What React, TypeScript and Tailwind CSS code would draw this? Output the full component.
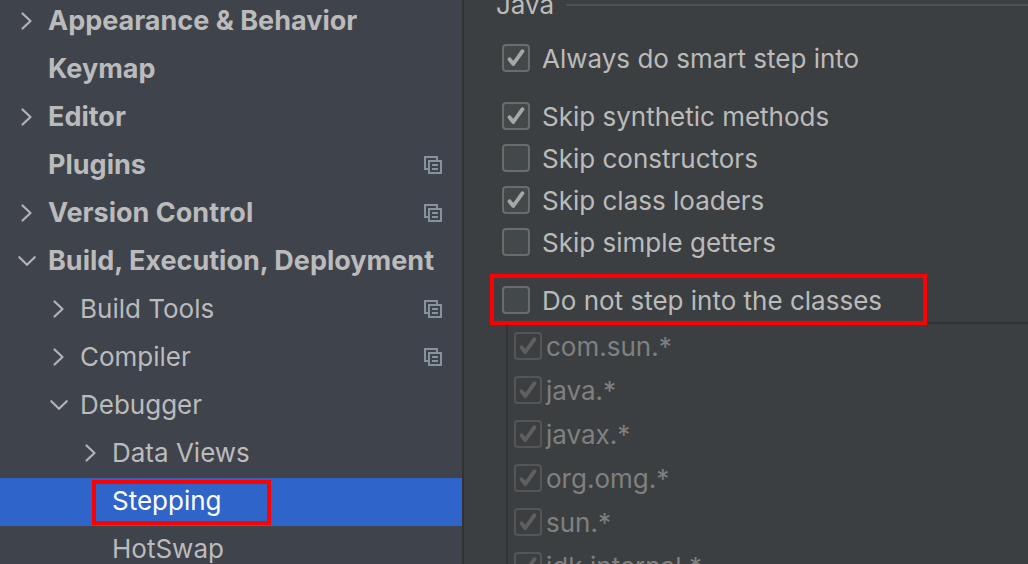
type TreeNode = {
  label: string;
  level: 0 | 1 | 2;
  state?: "open" | "closed";
  scoped?: boolean;
  selected?: boolean;
};

const tree: TreeNode[] = [
  { label: "Appearance & Behavior", level: 0, state: "closed" },
  { label: "Keymap", level: 0 },
  { label: "Editor", level: 0, state: "closed" },
  { label: "Plugins", level: 0, scoped: true },
  { label: "Version Control", level: 0, state: "closed", scoped: true },
  { label: "Build, Execution, Deployment", level: 0, state: "open" },
  { label: "Build Tools", level: 1, state: "closed", scoped: true },
  { label: "Compiler", level: 1, state: "closed", scoped: true },
  { label: "Debugger", level: 1, state: "open" },
  { label: "Data Views", level: 2, state: "closed" },
  { label: "Stepping", level: 2, selected: true },
  { label: "HotSwap", level: 2 },
];

const skipOptions = [
  { label: "Skip synthetic methods", checked: true },
  { label: "Skip constructors", checked: false },
  { label: "Skip class loaders", checked: true },
  { label: "Skip simple getters", checked: false },
];

const classPatterns = ["com.sun.*", "java.*", "javax.*", "org.omg.*", "sun.*", "jdk.internal.*"];

const indents = ["pl-4 text-[27px] font-bold", "pl-12", "pl-20"];

function Chevron({ state }: { state?: "open" | "closed" }) {
  return (
    <svg viewBox="0 0 22 22" className="size-[22px] shrink-0" fill="none" stroke="#b2b4b6" strokeWidth="2.2" strokeLinecap="round" strokeLinejoin="round" aria-hidden="true">
      {state === "closed" && <path d="M6.5 3.5 14.5 11l-8 7.5" />}
      {state === "open" && <path d="M3.3 7.2 11 14.8l7.7-7.6" />}
    </svg>
  );
}

function ScopeIcon() {
  return (
    <svg viewBox="0 0 18 18" className="size-[18px] shrink-0" fill="#87939a" shapeRendering="crispEdges" aria-hidden="true">
      <path d="M0 0h14v4h-2V2H2v10h2v2H0z" />
      <path fillRule="evenodd" d="M4 4h14v14H4zM6 6v10h10V6z" />
      <path d="M8 8h6v2H8zM8 12h6v2H8z" />
    </svg>
  );
}

function CheckBox({ label, checked, disabled = false }: { label: string; checked: boolean; disabled?: boolean }) {
  return (
    <label className={disabled ? "flex h-11 items-center gap-1 text-[#808080]" : "flex h-[42px] items-center gap-3"}>
      <span className="grid shrink-0">
        <input
          type="checkbox"
          defaultChecked={checked}
          disabled={disabled}
          className="peer col-start-1 row-start-1 size-7 appearance-none rounded-[4px] border-2 border-[#6b6b6b] bg-[#43494a] disabled:border-[#545556] disabled:bg-transparent"
        />
        <svg
          viewBox="0 0 28 28"
          className="pointer-events-none invisible col-start-1 row-start-1 size-7 text-[#a7a7a7] peer-checked:visible peer-disabled:text-[#606060]"
          fill="none"
          stroke="currentColor"
          strokeWidth="3.8"
          strokeLinecap="round"
          strokeLinejoin="round"
          aria-hidden="true"
        >
          <path d="M7.5 15.2 11.3 20 20.5 7.2" />
        </svg>
      </span>
      <span className="pt-[2px] whitespace-nowrap">{label}</span>
    </label>
  );
}

function Highlight({ className }: { className: string }) {
  return <span aria-hidden="true" className={`pointer-events-none absolute z-10 border-4 border-[#ff0000] ${className}`} />;
}

export default function App() {
  return (
    <div className="flex h-screen overflow-hidden bg-[#3c3f41] font-['Inter','Liberation_Sans',sans-serif] text-[26px] leading-8 text-[#bbbbbb]">
      <nav aria-label="Settings" className="w-[464px] shrink-0 border-r-2 border-[#323232] bg-[#3f434c]">
        <ul className="-mt-[2px]">
          {tree.map((node) => (
            <li key={node.label}>
              <button
                type="button"
                aria-expanded={node.state ? node.state === "open" : undefined}
                aria-current={node.selected ? "page" : undefined}
                className={`flex h-12 w-full items-center gap-[10px] pr-5 pb-[2px] text-left ${indents[node.level]} ${node.selected ? "bg-[#2f65ca] text-white" : ""}`}
              >
                <Chevron state={node.state} />
                <span className="relative grow whitespace-nowrap">
                  {node.label}
                  {node.selected && <Highlight className="-top-[5px] -left-5 h-[45px] w-[179px]" />}
                </span>
                {node.scoped && <ScopeIcon />}
              </button>
            </li>
          ))}
        </ul>
      </nav>

      <main className="min-w-0 grow pl-8">
        <h2 className="-mt-[11px] flex items-center gap-3">
          <span>Java</span>
          <span className="h-[2px] grow bg-[#515151]" />
        </h2>
        <form className="mt-4 pl-[6px]">
          <CheckBox label="Always do smart step into" checked />
          <div className="my-4">
            {skipOptions.map((option) => (
              <CheckBox key={option.label} {...option} />
            ))}
          </div>
          <div className="relative">
            <CheckBox label="Do not step into the classes" checked={false} />
            <Highlight className="-top-[5px] -left-3 h-[51px] w-[437px]" />
          </div>
          <ul className="mt-px ml-1 border-t-2 border-l-2 border-[#323232] pl-[6px]">
            {classPatterns.map((pattern) => (
              <li key={pattern}>
                <CheckBox label={pattern} checked disabled />
              </li>
            ))}
          </ul>
        </form>
      </main>
    </div>
  );
}
